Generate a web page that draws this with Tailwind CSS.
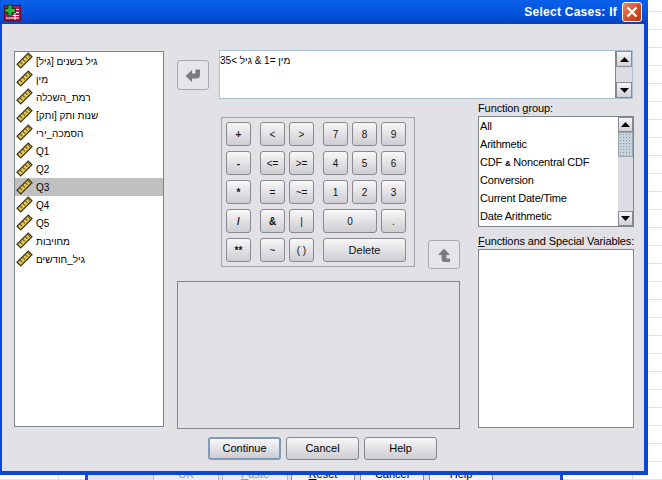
<!DOCTYPE html>
<html>
<head>
  <title>Select Cases: If</title>
  <meta charset="UTF-8">
  <script src="https://cdn.jsdelivr.net/npm/@tailwindcss/browser@4"></script>
</head>
<body class="m-0">
<svg width="0" height="0" class="absolute">
  <symbol id="ruler" viewBox="0 0 16 16">
    <path d="M1 11.5 11.5 1 15 4.5 4.5 15Z" fill="#e3c65a" stroke="#3a3520" stroke-width="1.2"/>
    <path d="M4 9.5l1.8 1.8M6.5 7l1.8 1.8M9 4.5l1.8 1.8M11.2 2.5l1.8 1.8" stroke="#5b4f20" stroke-width="1"/>
  </symbol>
  <symbol id="up" viewBox="0 0 9 5"><path d="M4.5 0 9 5H0Z" fill="#000"/></symbol>
  <symbol id="down" viewBox="0 0 9 5"><path d="M0 0H9L4.5 5Z" fill="#000"/></symbol>
</svg>

<div class="relative w-[662px] h-[480px] overflow-hidden bg-white font-['Liberation_Sans',sans-serif] text-black">

  <!-- worksheet behind the dialogs -->
  <div class="absolute inset-0 bg-[repeating-linear-gradient(to_bottom,#fff_0,#fff_11px,#e2e2e2_11px,#e2e2e2_12px,#fff_12px,#fff_18px)]"></div>
  <div class="absolute left-[58px] top-[470px] w-px h-[10px] bg-[#d8d8d8]"></div>
  <div class="absolute left-[632px] top-[470px] w-px h-[10px] bg-[#d8d8d8]"></div>

  <!-- parent dialog, almost fully covered -->
  <div class="absolute left-[85px] top-[458px] w-[478px] h-[30px] bg-[#e1e1e6] border-x-[3px] border-[#2a45c8] flex gap-[3px] pl-[65px] pt-[4px] text-[11px]">
    <div class="w-[66px] h-[24px] bg-[#ededf0] border border-[#b5b5b8] rounded-[3px] flex items-center justify-center text-[#9a9a9a]">OK</div>
    <div class="w-[66px] h-[24px] bg-[#ededf0] border border-[#b5b5b8] rounded-[3px] flex items-center justify-center text-[#9a9a9a]"><span><u>P</u>aste</span></div>
    <div class="w-[64px] h-[24px] bg-[#f2f2f4] border border-[#8a8a8a] rounded-[3px] flex items-center justify-center"><span><u>R</u>eset</span></div>
    <div class="w-[64px] h-[24px] bg-[#f2f2f4] border border-[#8a8a8a] rounded-[3px] flex items-center justify-center ml-[2px]">Cancel</div>
    <div class="w-[64px] h-[24px] bg-[#f2f2f4] border border-[#8a8a8a] rounded-[3px] flex items-center justify-center ml-[2px]">Help</div>
  </div>

  <!-- Select Cases: If dialog -->
  <div class="absolute left-0 top-0 w-[648px] h-[475px] bg-[#e1e1e6] border-l-2 border-r-[4px] border-b-[4px] border-[#0a46d8] flex flex-col">

    <!-- title bar -->
    <div class="h-[24px] -mr-[4px] -ml-[2px] shrink-0 bg-linear-to-b from-[#0a5fe8] via-[#0455de] to-[#0343c4] flex items-center pl-[4px] pr-[6px]">
      <svg width="17" height="17" viewBox="0 0 17 17" class="shrink-0">
        <rect x="0.5" y="1.5" width="16" height="15" fill="#b3124f" stroke="#5a0a30"/>
        <path d="M8 5.5H15M8 8.5H15M8 11.5H15M2 14H15M11 5V16" stroke="#fff" stroke-width="1"/>
        <path d="M4 1H8V4.5H11.5V8.5H8V12H4V8.5H1V4.5H4Z" fill="#22b83a" stroke="#0b3d12" stroke-width="1"/>
      </svg>
      <span class="ml-auto font-bold text-[12px] text-white tracking-[0.25px]">Select Cases: If</span>
      <div class="ml-[5px] w-[20px] h-[20px] rounded-[3px] border border-white bg-linear-to-br from-[#e98a6c] via-[#d9512c] to-[#b8340f] flex items-center justify-center">
        <svg width="12" height="12" viewBox="0 0 12 12"><path d="M1.5 1.5 10.5 10.5M10.5 1.5 1.5 10.5" stroke="#fff" stroke-width="2.4"/></svg>
      </div>
    </div>

    <div class="flex flex-1 pl-[12px]">
      <!-- variables list -->
      <div class="mt-[27px] w-[150px] h-[376px] shrink-0 bg-white border border-[#7d8590] text-[10px]">
        <div class="h-[18px] flex items-center gap-[3px] pl-px"><svg width="17" height="17" class="self-start"><use href="#ruler"/></svg><span dir="rtl">גיל בשנים [גיל]</span></div>
        <div class="h-[18px] flex items-center gap-[3px] pl-px"><svg width="17" height="17" class="self-start"><use href="#ruler"/></svg><span dir="rtl">מין</span></div>
        <div class="h-[18px] flex items-center gap-[3px] pl-px"><svg width="17" height="17" class="self-start"><use href="#ruler"/></svg><span dir="rtl">רמת_השכלה</span></div>
        <div class="h-[18px] flex items-center gap-[3px] pl-px"><svg width="17" height="17" class="self-start"><use href="#ruler"/></svg><span dir="rtl">שנות ותק [ותק]</span></div>
        <div class="h-[18px] flex items-center gap-[3px] pl-px"><svg width="17" height="17" class="self-start"><use href="#ruler"/></svg><span dir="rtl">הסמכה_ירי</span></div>
        <div class="h-[18px] flex items-center gap-[3px] pl-px"><svg width="17" height="17" class="self-start"><use href="#ruler"/></svg><span>Q1</span></div>
        <div class="h-[18px] flex items-center gap-[3px] pl-px"><svg width="17" height="17" class="self-start"><use href="#ruler"/></svg><span>Q2</span></div>
        <div class="h-[18px] flex items-center gap-[3px] pl-px bg-[#c0c0c0]"><svg width="17" height="17" class="self-start"><use href="#ruler"/></svg><span>Q3</span></div>
        <div class="h-[18px] flex items-center gap-[3px] pl-px"><svg width="17" height="17" class="self-start"><use href="#ruler"/></svg><span>Q4</span></div>
        <div class="h-[18px] flex items-center gap-[3px] pl-px"><svg width="17" height="17" class="self-start"><use href="#ruler"/></svg><span>Q5</span></div>
        <div class="h-[18px] flex items-center gap-[3px] pl-px"><svg width="17" height="17" class="self-start"><use href="#ruler"/></svg><span dir="rtl">מחויבות</span></div>
        <div class="h-[18px] flex items-center gap-[3px] pl-px"><svg width="17" height="17" class="self-start"><use href="#ruler"/></svg><span dir="rtl">גיל_חודשים</span></div>
      </div>

      <div class="ml-[13px] mt-[26px] w-[457px] shrink-0 flex flex-col">
        <!-- expression row -->
        <div class="flex items-center h-[49px]">
          <div class="w-[32px] h-[30px] rounded-[3px] border border-[#a8a8ac] bg-[#e6e6ea] flex items-center justify-center">
            <svg width="16" height="14" viewBox="0 0 16 14"><path d="M0.5 8 7 2V5.5H10.5V1.5H15V7.5C15 9.5 13.5 10.5 11.5 10.5H7V14Z" fill="#7c7c80"/></svg>
          </div>
          <div class="ml-[10px] w-[414px] h-[49px] bg-white border border-[#a9c0d2] flex">
            <div dir="rtl" class="flex-1 text-left text-[10px] leading-[18px] pt-px"><span class="inline-block">מין =1 &amp; גיל &gt;35</span></div>
            <div class="w-[17px] shrink-0 border-l border-[#7d8590] flex flex-col">
              <div class="h-[16px] bg-linear-to-b from-[#f6f6f8] to-[#d0d0d6] border border-[#8a8a90] flex items-center justify-center"><svg width="9" height="5"><use href="#up"/></svg></div>
              <div class="flex-1 bg-[#dcdce2]"></div>
              <div class="h-[16px] bg-linear-to-b from-[#f6f6f8] to-[#d0d0d6] border border-[#8a8a90] flex items-center justify-center"><svg width="9" height="5"><use href="#down"/></svg></div>
            </div>
          </div>
        </div>

        <div class="flex mt-[3px]">
          <!-- middle column -->
          <div class="w-[283px] shrink-0 flex flex-col">
            <div class="flex mt-[15px] ml-[44px]">
              <!-- keypad -->
              <div class="w-[194px] h-[150px] border border-[#a3a3a8] p-[4px] flex gap-[9px] text-[10px] text-[#111]">
                <div class="grid grid-cols-[25px] auto-rows-[24px] gap-y-[5px] font-bold">
                  <button class="rounded-[3px] border border-[#8a8a8e] bg-linear-to-b from-[#f8f8f9] to-[#cdcdd2]">+</button>
                  <button class="rounded-[3px] border border-[#8a8a8e] bg-linear-to-b from-[#f8f8f9] to-[#cdcdd2]">-</button>
                  <button class="rounded-[3px] border border-[#8a8a8e] bg-linear-to-b from-[#f8f8f9] to-[#cdcdd2]">*</button>
                  <button class="rounded-[3px] border border-[#8a8a8e] bg-linear-to-b from-[#f8f8f9] to-[#cdcdd2]">/</button>
                  <button class="rounded-[3px] border border-[#8a8a8e] bg-linear-to-b from-[#f8f8f9] to-[#cdcdd2]">**</button>
                </div>
                <div class="grid grid-cols-[25px_25px] auto-rows-[24px] gap-x-[4px] gap-y-[5px]">
                  <button class="rounded-[3px] border border-[#8a8a8e] bg-linear-to-b from-[#f8f8f9] to-[#cdcdd2]">&lt;</button>
                  <button class="rounded-[3px] border border-[#8a8a8e] bg-linear-to-b from-[#f8f8f9] to-[#cdcdd2]">&gt;</button>
                  <button class="rounded-[3px] border border-[#8a8a8e] bg-linear-to-b from-[#f8f8f9] to-[#cdcdd2]">&lt;=</button>
                  <button class="rounded-[3px] border border-[#8a8a8e] bg-linear-to-b from-[#f8f8f9] to-[#cdcdd2]">&gt;=</button>
                  <button class="rounded-[3px] border border-[#8a8a8e] bg-linear-to-b from-[#f8f8f9] to-[#cdcdd2]">=</button>
                  <button class="rounded-[3px] border border-[#8a8a8e] bg-linear-to-b from-[#f8f8f9] to-[#cdcdd2]">~=</button>
                  <button class="rounded-[3px] border border-[#8a8a8e] bg-linear-to-b from-[#f8f8f9] to-[#cdcdd2] font-bold">&amp;</button>
                  <button class="rounded-[3px] border border-[#8a8a8e] bg-linear-to-b from-[#f8f8f9] to-[#cdcdd2]">|</button>
                  <button class="rounded-[3px] border border-[#8a8a8e] bg-linear-to-b from-[#f8f8f9] to-[#cdcdd2]">~</button>
                  <button class="rounded-[3px] border border-[#8a8a8e] bg-linear-to-b from-[#f8f8f9] to-[#cdcdd2]">( )</button>
                </div>
                <div class="grid grid-cols-[25px_25px_25px] auto-rows-[24px] gap-x-[4px] gap-y-[5px]">
                  <button class="rounded-[3px] border border-[#8a8a8e] bg-linear-to-b from-[#f8f8f9] to-[#cdcdd2]">7</button>
                  <button class="rounded-[3px] border border-[#8a8a8e] bg-linear-to-b from-[#f8f8f9] to-[#cdcdd2]">8</button>
                  <button class="rounded-[3px] border border-[#8a8a8e] bg-linear-to-b from-[#f8f8f9] to-[#cdcdd2]">9</button>
                  <button class="rounded-[3px] border border-[#8a8a8e] bg-linear-to-b from-[#f8f8f9] to-[#cdcdd2]">4</button>
                  <button class="rounded-[3px] border border-[#8a8a8e] bg-linear-to-b from-[#f8f8f9] to-[#cdcdd2]">5</button>
                  <button class="rounded-[3px] border border-[#8a8a8e] bg-linear-to-b from-[#f8f8f9] to-[#cdcdd2]">6</button>
                  <button class="rounded-[3px] border border-[#8a8a8e] bg-linear-to-b from-[#f8f8f9] to-[#cdcdd2]">1</button>
                  <button class="rounded-[3px] border border-[#8a8a8e] bg-linear-to-b from-[#f8f8f9] to-[#cdcdd2]">2</button>
                  <button class="rounded-[3px] border border-[#8a8a8e] bg-linear-to-b from-[#f8f8f9] to-[#cdcdd2]">3</button>
                  <button class="col-span-2 rounded-[3px] border border-[#8a8a8e] bg-linear-to-b from-[#f8f8f9] to-[#cdcdd2]">0</button>
                  <button class="rounded-[3px] border border-[#8a8a8e] bg-linear-to-b from-[#f8f8f9] to-[#cdcdd2]">.</button>
                  <button class="col-span-3 rounded-[3px] border border-[#8a8a8e] bg-linear-to-b from-[#f8f8f9] to-[#cdcdd2] text-[11px]">Delete</button>
                </div>
              </div>
              <div class="ml-[13px] mt-[123px] w-[32px] h-[29px] rounded-[3px] border border-[#a8a8ac] bg-[#e6e6ea] flex items-center justify-center">
                <svg width="14" height="14" viewBox="0 0 14 14"><path d="M7 0.5 13 7H9.5V10.5H13V14H7C5 14 4.5 12.5 4.5 11V7H1Z" fill="#7c7c80"/></svg>
              </div>
            </div>
            <div class="mt-[12px] w-[283px] h-[148px] border border-[#85858a]"></div>
          </div>

          <!-- function group column -->
          <div class="ml-[18px] w-[156px] shrink-0 flex flex-col text-[11px]">
            <div class="h-[15px] leading-[13px] tracking-[-0.1px]">Function <u>g</u>roup:</div>
            <div class="mt-[-1px] h-[111px] border border-[#7d8590] bg-white flex">
              <div class="flex-1 pl-px tracking-[-0.2px]">
                <div class="h-[18px] leading-[18px]">All</div>
                <div class="h-[18px] leading-[18px]">Arithmetic</div>
                <div class="h-[18px] leading-[18px]">CDF <span class="text-[8px] font-bold">&amp;</span> Noncentral CDF</div>
                <div class="h-[18px] leading-[18px]">Conversion</div>
                <div class="h-[18px] leading-[18px]">Current Date/Time</div>
                <div class="h-[18px] leading-[18px]">Date Arithmetic</div>
              </div>
              <div class="w-[15px] shrink-0 flex flex-col bg-[#dcdce2]">
                <div class="h-[15px] bg-linear-to-b from-[#f6f6f8] to-[#d0d0d6] border border-[#8a8a90] flex items-center justify-center"><svg width="9" height="5"><use href="#up"/></svg></div>
                <div class="h-[25px] bg-[#c6d3dc] border border-[#9aa5ae] bg-[radial-gradient(#8d9aa3_0.6px,transparent_0.7px)] bg-[length:3px_3px]"></div>
                <div class="flex-1"></div>
                <div class="h-[15px] bg-linear-to-b from-[#f6f6f8] to-[#d0d0d6] border border-[#8a8a90] flex items-center justify-center"><svg width="9" height="5"><use href="#down"/></svg></div>
              </div>
            </div>
            <div class="mt-[7px] h-[15px] leading-[15px] tracking-[-0.1px] whitespace-nowrap"><u>F</u>unctions and Special Variables:</div>
            <div class="mt-[0px] h-[179px] border border-[#85858a] bg-white"></div>
          </div>
        </div>
      </div>
    </div>

    <!-- Continue / Cancel / Help -->
    <div class="absolute left-[206px] top-[437px] flex gap-[5px] text-[11px]">
      <button class="w-[73px] h-[23px] rounded-[3px] border-2 border-[#7f9ab8] bg-linear-to-b from-[#f8f8f9] to-[#cdcdd2]">Continue</button>
      <button class="w-[73px] h-[23px] rounded-[3px] border border-[#85858a] bg-linear-to-b from-[#f8f8f9] to-[#cdcdd2]">Cancel</button>
      <button class="w-[73px] h-[23px] rounded-[3px] border border-[#85858a] bg-linear-to-b from-[#f8f8f9] to-[#cdcdd2]">Help</button>
    </div>
  </div>
</div>
</body>
</html>
